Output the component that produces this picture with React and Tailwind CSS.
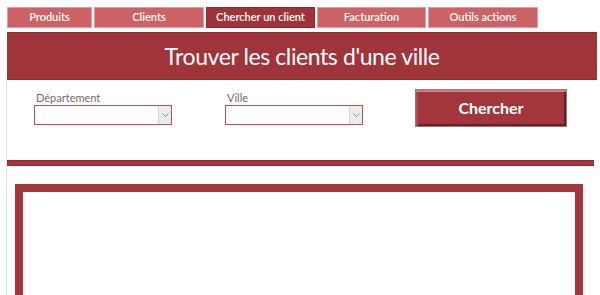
export default function App() {
  const tabs = [
    { label: 'Produits', w: 'w-[85px]', active: false },
    { label: 'Clients', w: 'w-[110px]', active: false },
    { label: 'Chercher un client', w: 'w-[109px]', active: true },
    { label: 'Facturation', w: 'w-[109px]', active: false },
    { label: 'Outils actions', w: 'w-[110px]', active: false },
  ];

  return (
    <div className="w-[600px] h-[295px] overflow-hidden bg-white font-['Lato',sans-serif]">

      {/* ONGLETS */}
      <div className="flex gap-[2px] pl-[7px] pt-[7px]">
        {tabs.map((t) => (
          <div
            key={t.label}
            className={`${t.w} h-[21px] flex items-center justify-center text-[11px] font-semibold text-white border ${
              t.active ? 'bg-[#9f3339] border-[#8c2a30]' : 'bg-[#cd6166] border-[#e0a0a3]'
            }`}
          >
            {t.label}
          </div>
        ))}
      </div>

      {/* TITRE */}
      <div className="ml-[7px] mt-[4px] w-[590px] h-[48px] bg-[#9f353a] border-t border-b border-[#8a262c] flex items-center justify-center">
        <h1 className="text-white text-[23px] tracking-[-0.4px] leading-none">Trouver les clients d'une ville</h1>
      </div>

      {/* CONTENU */}
      <div className="ml-[6px] border-l border-[#e4e4e4] h-[215px]">

        <div className="flex h-[80px]">
          <div className="ml-[27px] mt-[11px] flex flex-col">
            <label className="text-[11px] leading-[14px] text-[#6b6b6b] pl-[2px]">Département</label>
            <Select width="w-[138px]" />
          </div>

          <div className="ml-[53px] mt-[11px] flex flex-col">
            <label className="text-[11px] leading-[14px] text-[#6b6b6b] pl-[2px]">Ville</label>
            <Select width="w-[138px]" />
          </div>

          <button className="ml-[52px] mt-[9px] w-[152px] h-[38px] bg-[#a2363c] text-white text-[16px] font-bold border border-[#7b7f8e] shadow-[inset_0_2px_0_#dc7a7f,inset_2px_0_0_#b9484e,inset_0_-2px_0_#6a1d22,inset_-2px_0_0_#6a1d22]">
            Chercher
          </button>
        </div>

        <div className="w-[587px] h-[6px] bg-[#a2363c] border-y border-[#8e2a30]" />

        <div className="ml-[8px] mt-[18px] w-[568px] h-[200px] border-[8px] border-[#a3353b] bg-white" />
      </div>

    </div>
  );
}

function Select({ width }) {
  return (
    <div className={`${width} h-[20px] border border-[#c0504d] bg-white flex justify-end`}>
      <div className="w-[13px] h-full bg-[#ececec] border-l border-[#d6d6d6] flex items-center justify-center">
        <svg width="7" height="4" viewBox="0 0 7 4">
          <path d="M0.5 0.5 L3.5 3.5 L6.5 0.5" fill="none" stroke="#8a8a8a" strokeWidth="1" />
        </svg>
      </div>
    </div>
  );
}
